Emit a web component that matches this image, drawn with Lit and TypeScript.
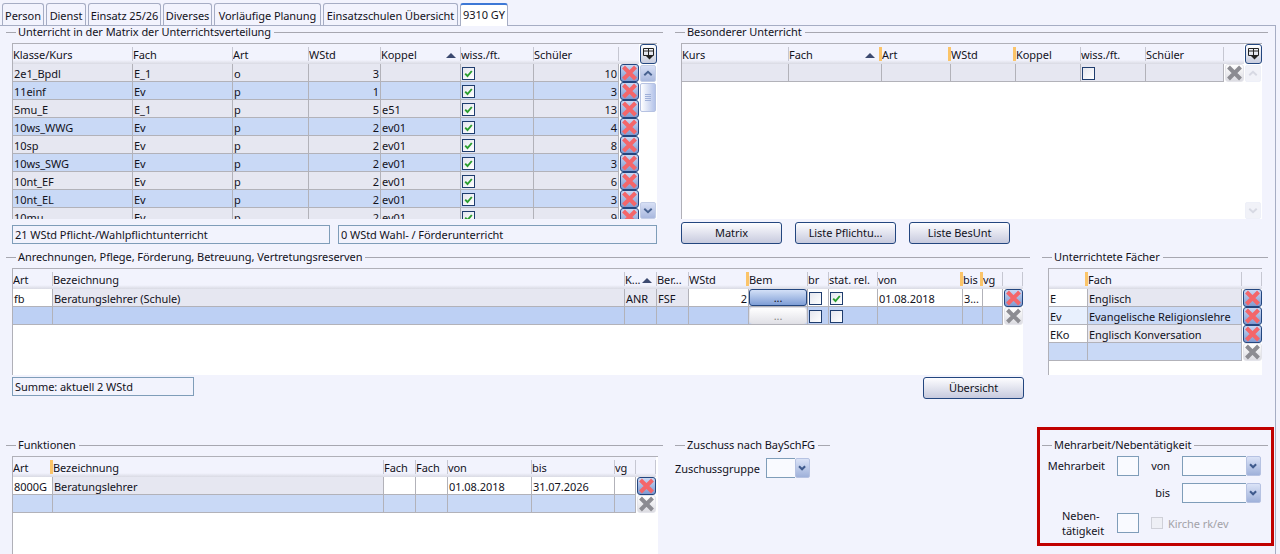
import { LitElement, html, css, svg } from "lit";
import { customElement } from "lit/decorators.js";

type Col = { l: string; w: number; m?: "o" | "n"; s?: boolean };
type Cell = string | { t?: string; c?: string; r?: boolean; k?: string };

const T1: Col[] = [
  { l: "Klasse/Kurs", w: 120 }, { l: "Fach", w: 100 }, { l: "Art", w: 76 }, { l: "WStd", w: 72 },
  { l: "Koppel", w: 80, s: true }, { l: "wiss./ft.", w: 73 }, { l: "Schüler", w: 85 }, { l: "", w: 20, m: "n" },
];
const T1R: [string, string, string, string, string, string][] = [
  ["2e1_Bpdl", "E_1", "o", "3", "", "10"], ["11einf", "Ev", "p", "1", "", "3"], ["5mu_E", "E_1", "p", "5", "e51", "13"],
  ["10ws_WWG", "Ev", "p", "2", "ev01", "4"], ["10sp", "Ev", "p", "2", "ev01", "8"], ["10ws_SWG", "Ev", "p", "2", "ev01", "3"],
  ["10nt_EF", "Ev", "p", "2", "ev01", "6"], ["10nt_EL", "Ev", "p", "2", "ev01", "3"], ["10mu", "Ev", "p", "2", "ev01", "9"],
];
const T2: Col[] = [
  { l: "Kurs", w: 107 }, { l: "Fach", w: 93, m: "o", s: true }, { l: "Art", w: 69, m: "o" }, { l: "WStd", w: 65, m: "o" },
  { l: "Koppel", w: 65 }, { l: "wiss./ft.", w: 65 }, { l: "Schüler", w: 78 }, { l: "", w: 20, m: "n" },
];
const T3: Col[] = [
  { l: "Art", w: 40 }, { l: "Bezeichnung", w: 572 }, { l: "K...", w: 32, s: true }, { l: "Ber...", w: 32 }, { l: "WStd", w: 60, m: "o" },
  { l: "Bem", w: 59 }, { l: "br", w: 21 }, { l: "stat. rel.", w: 49 }, { l: "von", w: 85, m: "o" }, { l: "bis", w: 20, m: "o" },
  { l: "vg", w: 20 }, { l: "", w: 20 },
];
const T4: Col[] = [{ l: "", w: 39, m: "o" }, { l: "Fach", w: 154 }, { l: "", w: 20 }];
const T5: Col[] = [
  { l: "Art", w: 40, m: "o" }, { l: "Bezeichnung", w: 331 }, { l: "Fach", w: 32 }, { l: "Fach", w: 32 }, { l: "von", w: 84 },
  { l: "bis", w: 83 }, { l: "vg", w: 21 }, { l: "", w: 20 },
];
const TABS: [string, number][] = [
  ["Person", 42], ["Dienst", 40], ["Einsatz 25/26", 73], ["Diverses", 49], ["Vorläufige Planung", 107],
  ["Einsatzschulen Übersicht", 135], ["9310 GY", 48],
];

const chevUp = svg`<path d="M4 10 8.5 6 13 10" fill="none" stroke="currentColor" stroke-width="2.4"/>`;
const chevDown = svg`<path d="M4 6 8.5 10 13 6" fill="none" stroke="currentColor" stroke-width="2.4"/>`;

@customElement("app-root")
export class AppRoot extends LitElement {
  static styles = css`
    :host { display: block; width: 1280px; height: 554px; overflow: hidden; background: #f2f3fd;
      font: 11px/13px "Noto Sans", "Open Sans", sans-serif; letter-spacing: -0.06px; color: #12121c; }
    .tabs { display: flex; gap: 2px; height: 22px; padding: 3px 0 0 2px; position: relative; z-index: 1; }
    .tab { box-sizing: border-box; height: 22px; border: 1px solid #a6adc4; border-bottom: none; border-radius: 3px 3px 0 0;
      text-align: center; line-height: 24px; white-space: nowrap; }
    .tab.on { height: 23px; background: #fff; border-top: 2px solid #3d78d6; line-height: 19px; }
    .panel { box-sizing: border-box; width: 1276px; height: 529px; border-top: 1px solid #a6adc4; border-right: 1px solid #a6adc4; overflow: hidden; }
    .rowA { display: flex; gap: 12px; height: 225px; padding-left: 6px; }
    .rowB { display: flex; gap: 12px; height: 176px; padding-left: 6px; }
    .rowC { display: flex; height: 127px; padding-left: 6px; align-items: flex-start; }
    .title { display: flex; align-items: center; height: 13px; }
    .title i { height: 1px; background: #a7a7b0; width: 10px; }
    .title i:last-child { flex: 1; }
    .title span { margin: -2px 3px 0 2px; white-space: nowrap; }
    .body { padding: 4px 0 0 6px; }
    .g1 { width: 657px; } .g2 { width: 593px; } .g3 { width: 1024px; } .g4 { width: 226px; }
    .g5 { width: 657px; margin-top: 12px; } .g6 { width: 155px; margin: 12px 0 0 12px; }
    .tbl { display: flex; box-sizing: border-box; background: #fff; border-top: 1px solid #b0b0b8; border-left: 1px solid #b0b0b8; overflow: hidden; }
    .tmain { flex: none; }
    .hdr { display: grid; height: 20px; background: linear-gradient(#f2f3fd 0 80%, #d9dae3); }
    .hc { display: flex; align-items: flex-start; min-width: 0; padding-top: 3px; box-sizing: border-box; overflow: hidden; }
    .hc b { font-weight: 400; flex: 1; padding-left: 0; line-height: 15px; white-space: nowrap; overflow: hidden; }
    .sep { flex: none; width: 1px; height: 14px; background: #c6c7d2; }
    .sep.o { width: 3px; background: #fbc469; }
    .sort { flex: none; width: 0; height: 0; margin: 6px 4px 0 0; border: 5px solid transparent; border-top: 0; border-bottom: 5px solid #3c4a70; }
    .row { display: grid; height: 18px; }
    .cell { box-sizing: border-box; height: 18px; border-right: 1px solid #b2b2b9; border-bottom: 1px solid #b2b2b9;
      padding: 1px 1px 0 1px; line-height: 17px; white-space: nowrap; overflow: hidden; }
    .cell.r { text-align: right; }
    .gray { background: #e6e7f1; } .blue { background: #c9d9f6; } .blue2 { background: #bdd0f4; }
    .white { background: #fff; } .pale { background: #e8f0fd; }
    .cell.k { display: flex; align-items: center; padding: 1px 0 0 1px; }
    .cell.x { padding: 0; border: none; }
    .chk { box-sizing: border-box; width: 13px; height: 13px; border: 1px solid #1f3d6e; background: linear-gradient(135deg, #e4e6ee, #fff); display: block; }
    .xb { display: block; box-sizing: border-box; width: 19px; height: 18px; margin-left: 1px; border: 1px solid #23467f; border-radius: 3px;
      background: linear-gradient(#c9d8f4, #7f9ad0); color: #f4666a; }
    .xb.d { border-color: #e4e4ea; background: linear-gradient(#fff, #dcdce2); color: #8c8c92; }
    .bem { box-sizing: border-box; width: 100%; height: 17px; border: 1px solid #23467f; border-radius: 3px;
      background: linear-gradient(#d3e0f7, #7f9ed6); text-align: center; line-height: 15px; }
    .bem.d { border-color: #e0e0e6; background: linear-gradient(#fff, #e2e2e8); color: #888; }
    .cell.bm { padding: 0; }
    .side { flex: none; width: 18px; box-sizing: border-box; display: flex; flex-direction: column; margin-left: 1px; border-right: 1px solid #cfd1df; }
    .tool { box-sizing: border-box; flex: none; width: 17px; height: 20px; border: 1px solid #23467f; border-radius: 3px; background: linear-gradient(#fff, #c8cddf); }
    .sb { flex: none; width: 16px; height: 17px; margin-top: 1px; box-sizing: border-box; border: 1px solid #c3cde6; border-radius: 2px; background: linear-gradient(#d7dff5, #a9b8de); color: #47618f; }
    .sb svg { display: block; width: 14px; height: 15px; }
    .sb.d { border-color: #eef0f8; background: #f1f2f8; color: #d7d9e3; }
    .thumb { flex: none; width: 16px; height: 29px; margin-top: 1px; box-sizing: border-box; border: 1px solid #b6c2e2; border-radius: 2px;
      background: linear-gradient(90deg, #fff, #b4c3ea); display: flex; flex-direction: column; gap: 1px; align-items: center; justify-content: center; }
    .thumb i { width: 6px; height: 1px; background: #9fb0d8; }
    .fill { flex: 1; }
    .boxes { display: flex; gap: 8px; margin-top: 6px; }
    .box { box-sizing: border-box; height: 19px; border: 1px solid #7f9db9; padding-left: 2px; line-height: 17px; white-space: nowrap; }
    .w318 { width: 318px; } .w319 { width: 319px; } .w182 { width: 182px; }
    .btns { display: flex; gap: 13px; margin-top: 3px; }
    .btn { box-sizing: border-box; width: 101px; height: 22px; border: 1px solid #23467f; border-radius: 3px; background: linear-gradient(#fdfdff, #c7cade); text-align: center; line-height: 20px; white-space: nowrap; }
    .sum { display: flex; justify-content: space-between; margin-top: 2px; width: 1012px; }
    .zus { display: flex; margin-top: 5px; align-items: center; }
    .zus label { width: 91px; line-height: 19px; padding-top: 2px; white-space: nowrap; }
    .combo { display: flex; height: 20px; }
    .combo .in { box-sizing: border-box; flex: 1; border: 1px solid #7f9db9; border-right: none; background: #f9faff; }
    .combo .ar { box-sizing: border-box; flex: none; width: 15px; border: 1px solid #b6c2e2; border-radius: 2px; background: linear-gradient(#dbe3f7, #9fb1da); color: #3f5a8d; }
    .combo svg { display: block; width: 13px; height: 18px; }
    .red { box-sizing: border-box; flex: none; width: 237px; height: 119px; margin: 0 1px 0 auto; border: 3px solid #c00000; padding: 9px 3px 0 2px; }
    .form { display: grid; grid-template-columns: 63px 22px 19px 79px; column-gap: 12px; grid-template-rows: 27px 30px 20px; margin-top: 4px; }
    .lab { line-height: 19px; text-align: right; white-space: nowrap; }
    .inp { box-sizing: border-box; height: 20px; border: 1px solid #7f9db9; background: #f9faff; }
    .neben { display: flex; flex-direction: column; justify-content: center; height: 20px; align-items: flex-end; line-height: 15px; }
    .neben span { width: 43px; white-space: nowrap; }
    .kirche { grid-column: 3 / 5; display: flex; align-items: center; gap: 5px; color: #a2a2a8; white-space: nowrap; }
    .kirche i { box-sizing: border-box; width: 12px; height: 12px; border: 1px solid #cfd0d8; background: #eeeff5; }
    .s3 { grid-column: 3; } .c4 { grid-column: 4; } .c1 { grid-column: 1; }
  `;

  private xBtn(d = false) {
    const c = html`<svg class="xb ${d ? "d" : ""}" viewBox="0 0 17 16"><path d="M2.5 2 14.5 14M14.5 2 2.5 14" stroke="currentColor" stroke-width="4" fill="none"/></svg>`;
    return html`<div class="cell x">${c}</div>`;
  }

  private check(bg: string, on: boolean) {
    return html`<div class="cell k ${bg}"><svg class="chk" viewBox="0 0 11 11">${on ? svg`<path d="M2.2 5.6 4.5 8 8.8 3" fill="none" stroke="#2b9e2f" stroke-width="1.9"/>` : ""}</svg></div>`;
  }

  private cell(c: Cell, bg: string) {
    if (typeof c === "string") return html`<div class="cell ${bg}">${c}</div>`;
    if (c.k === "x") return this.xBtn();
    if (c.k === "xd") return this.xBtn(true);
    if (c.k === "on") return this.check(c.c ?? bg, true);
    if (c.k === "off") return this.check(c.c ?? bg, false);
    if (c.k === "btn") return html`<div class="cell bm ${bg}"><div class="bem">...</div></div>`;
    if (c.k === "btnd") return html`<div class="cell bm ${bg}"><div class="bem d">...</div></div>`;
    return html`<div class="cell ${c.c ?? bg} ${c.r ? "r" : ""}">${c.t ?? ""}</div>`;
  }

  private table(cols: Col[], rows: { bg: string; cells: Cell[] }[], w: number, h: number, side?: "on" | "off") {
    const tpl = cols.map((c) => c.w + "px").join(" ");
    const sum = cols.reduce((a, c) => a + c.w, 0);
    const d = side === "off";
    return html`<div class="tbl" style="width:${w}px;height:${h}px">
      <div class="tmain" style="width:${sum}px">
        <div class="hdr" style="grid-template-columns:${tpl}">
          ${cols.map((c) => html`<div class="hc"><b>${c.l}</b>${c.s ? html`<span class="sort"></span>` : ""}${
            c.m === "n" ? "" : html`<span class="sep ${c.m === "o" ? "o" : ""}"></span>`}</div>`)}
        </div>
        ${rows.map((r) => html`<div class="row" style="grid-template-columns:${tpl}">${r.cells.map((c) => this.cell(c, r.bg))}</div>`)}
      </div>
      ${side ? html`<div class="side">
        <div class="tool"><svg width="15" height="18" viewBox="0 0 15 18"><path d="M2.5 3.5h10v7h-10zM2.5 6h10M7.5 3.5v7" fill="none" stroke="#222" stroke-width="1"/><path d="M5 11h7l-3.5 3.5z" fill="#222"/></svg></div>
        <div class="sb ${d ? "d" : ""}"><svg viewBox="0 0 17 16">${chevUp}</svg></div>
        ${d ? "" : html`<div class="thumb"><i></i><i></i><i></i><i></i></div>`}
        <div class="fill"></div>
        <div class="sb ${d ? "d" : ""}"><svg viewBox="0 0 17 16">${chevDown}</svg></div>
      </div>` : ""}
    </div>`;
  }

  private title(t: string) {
    return html`<div class="title"><i></i><span>${t}</span><i></i></div>`;
  }

  private combo(w: number) {
    return html`<div class="combo" style="width:${w}px"><div class="in"></div><div class="ar"><svg viewBox="0 0 15 18"><path d="M3.5 7 7 10.5 10.5 7" fill="none" stroke="currentColor" stroke-width="2.4"/></svg></div></div>`;
  }

  render() {
    const t1Rows = T1R.map((r, i) => ({
      bg: i % 2 ? "blue" : "gray",
      cells: [r[0], r[1], r[2], { t: r[3], r: true }, r[4], { k: "on" }, { t: r[5], r: true }, { k: "x" }] as Cell[],
    }));
    const t2Rows = [{ bg: "gray", cells: ["", "", "", "", "", { k: "off" }, "", { k: "xd" }] as Cell[] }];
    const W = "white";
    const t3Rows = [
      { bg: "gray", cells: [{ t: "fb", c: W }, "Beratungslehrer (Schule)", "ANR", "FSF", { t: "2", r: true, c: W }, { k: "btn" }, { k: "off", c: W }, { k: "on", c: W }, { t: "01.08.2018", c: W }, { t: "3...", c: W }, { t: "", c: W }, { k: "x" }] as Cell[] },
      { bg: "blue2", cells: ["", "", "", "", "", { k: "btnd" }, { k: "off" }, { k: "off" }, "", "", "", { k: "xd" }] as Cell[] },
    ];
    const t4Rows = [
      { bg: "gray", cells: [{ t: "E", c: W }, "Englisch", { k: "x" }] as Cell[] },
      { bg: "blue", cells: [{ t: "Ev", c: "pale" }, "Evangelische Religionslehre", { k: "x" }] as Cell[] },
      { bg: "gray", cells: [{ t: "EKo", c: W }, "Englisch Konversation", { k: "x" }] as Cell[] },
      { bg: "blue", cells: ["", "", { k: "xd" }] as Cell[] },
    ];
    const t5Rows = [
      { bg: "gray", cells: [{ t: "8000G", c: W }, "Beratungslehrer", { t: "", c: W }, { t: "", c: W }, { t: "01.08.2018", c: W }, { t: "31.07.2026", c: W }, { t: "", c: W }, { k: "x" }] as Cell[] },
      { bg: "blue", cells: ["", "", "", "", "", "", "", { k: "xd" }] as Cell[] },
    ];
    return html`
      <div class="tabs">${TABS.map(([t, w], i) => html`<div class="tab ${i === 6 ? "on" : ""}" style="width:${w}px">${t}</div>`)}</div>
      <div class="panel">
        <div class="rowA">
          <section class="g1">
            ${this.title("Unterricht in der Matrix der Unterrichtsverteilung")}
            <div class="body">
              ${this.table(T1, t1Rows, 645, 176, "on")}
              <div class="boxes"><div class="box w318">21 WStd Pflicht-/Wahlpflichtunterricht</div><div class="box w319">0 WStd Wahl- / Förderunterricht</div></div>
            </div>
          </section>
          <section class="g2">
            ${this.title("Besonderer Unterricht")}
            <div class="body">
              ${this.table(T2, t2Rows, 581, 176, "off")}
              <div class="btns"><div class="btn">Matrix</div><div class="btn">Liste Pflichtu...</div><div class="btn">Liste BesUnt</div></div>
            </div>
          </section>
        </div>
        <div class="rowB">
          <section class="g3">
            ${this.title("Anrechnungen, Pflege, Förderung, Betreuung, Vertretungsreserven")}
            <div class="body">
              ${this.table(T3, t3Rows, 1011, 107)}
              <div class="sum"><div class="box w182">Summe: aktuell 2 WStd</div><div class="btn">Übersicht</div></div>
            </div>
          </section>
          <section class="g4">
            ${this.title("Unterrichtete Fächer")}
            <div class="body">${this.table(T4, t4Rows, 214, 107)}</div>
          </section>
        </div>
        <div class="rowC">
          <section class="g5">
            ${this.title("Funktionen")}
            <div class="body">${this.table(T5, t5Rows, 646, 110)}</div>
          </section>
          <section class="g6">
            ${this.title("Zuschuss nach BaySchFG")}
            <div class="zus"><label>Zuschussgruppe</label>${this.combo(44)}</div>
          </section>
          <section class="red">
            ${this.title("Mehrarbeit/Nebentätigkeit")}
            <div class="form">
              <div class="lab">Mehrarbeit</div><div class="inp"></div><div class="lab">von</div>${this.combo(79)}
              <div class="lab s3">bis</div><div class="c4">${this.combo(79)}</div>
              <div class="neben c1"><span>Neben-</span><span>tätigkeit</span></div><div class="inp"></div>
              <div class="kirche"><i></i>Kirche rk/ev</div>
            </div>
          </section>
        </div>
      </div>
    `;
  }
}
